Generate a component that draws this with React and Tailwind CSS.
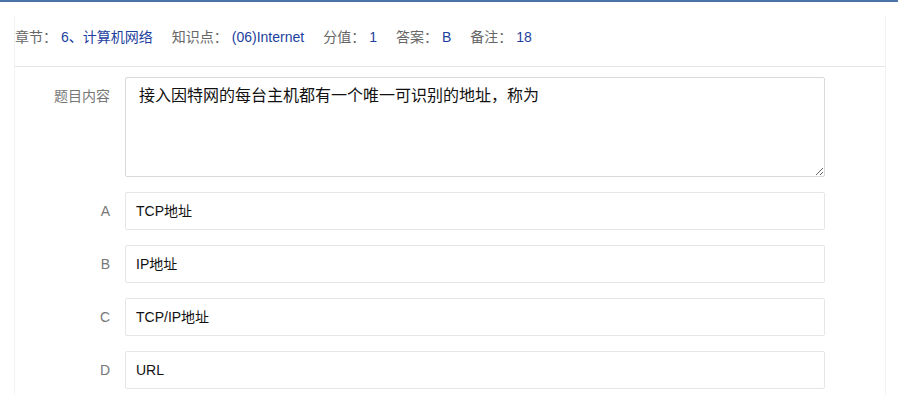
export default function App() {
  const font = { fontFamily: '"Liberation Sans", Arial, "Noto Sans CJK SC", sans-serif' };
  const meta = [
    ["章节：", "6、计算机网络"],
    ["知识点：", "(06)Internet"],
    ["分值：", "1"],
    ["答案：", "B"],
    ["备注：", "18"],
  ];
  const options = [
    ["A", "TCP地址"],
    ["B", "IP地址"],
    ["C", "TCP/IP地址"],
    ["D", "URL"],
  ];
  return (
    <div className="w-[898px] h-[395px] bg-white overflow-hidden" style={font}>
      <div className="h-[2px] bg-[#4a74a8]" />
      <div className="ml-[14px] w-[872px] mt-[14px] border-x border-[#f3f3f3] h-[400px]">
        <div className="h-[51px] border-b border-[#e6e6e6] flex items-start pt-[10px] text-[14px] leading-[22px]">
          {meta.map(([k, v]) => (
            <div key={k} className="flex mr-[19px]">
              <span className="text-[#666666]">{k}</span>
              <span className="ml-[4px] text-[#1d3f9e]">{v}</span>
            </div>
          ))}
        </div>
        <div className="pt-[10px] flex flex-col gap-[15px] text-[14px]">
          <div className="flex">
            <div className="w-[110px] pr-[15px] text-right text-[#777777] pt-[9px] leading-[20px] shrink-0">题目内容</div>
            <textarea
              readOnly
              defaultValue="接入因特网的每台主机都有一个唯一可识别的地址，称为"
              className="w-[700px] h-[100px] border border-[#d9d9d9] rounded-[2px] pl-[13px] pr-[10px] pt-[8px] leading-[20px] text-[16px] text-[#111111] outline-none"
              style={font}
            />
          </div>
          {options.map(([l, v]) => (
            <div key={l} className="flex items-center">
              <div className="w-[110px] pr-[15px] text-right text-[#777777] shrink-0">{l}</div>
              <div className="w-[700px] h-[38px] border border-[#e6e6e6] rounded-[2px] pl-[10px] flex items-center text-[#111111]">
                {v}
              </div>
            </div>
          ))}
        </div>
      </div>
    </div>
  );
}
